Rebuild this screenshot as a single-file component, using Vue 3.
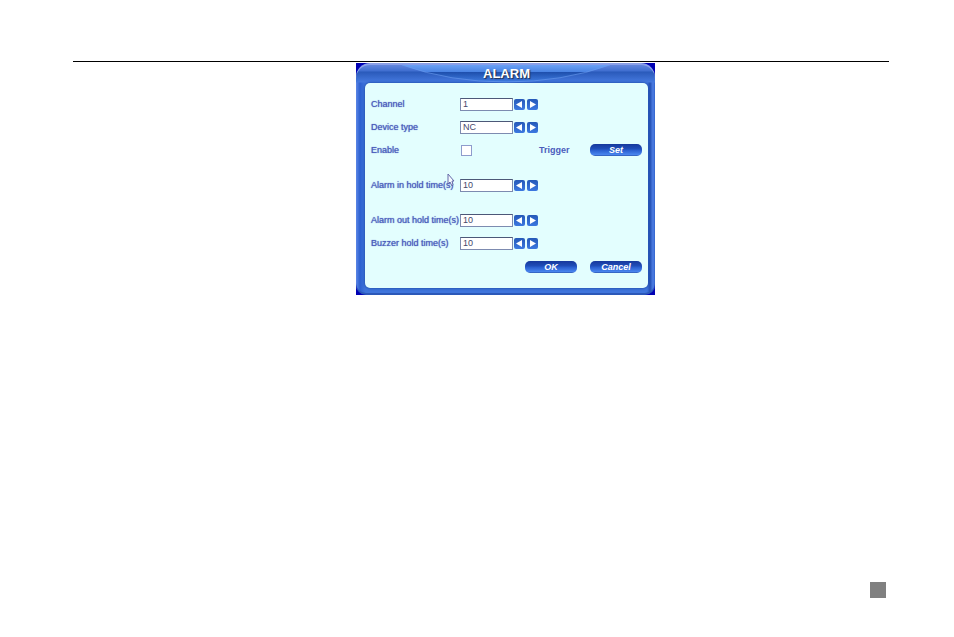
<script setup>
import { reactive, ref } from "vue";

const fields = reactive([
  { id: "channel", label: "Channel", value: "1" },
  { id: "device-type", label: "Device type", value: "NC", options: ["NC", "NO"] },
  { id: "alarm-in", label: "Alarm in hold time(s)", value: "10", spaced: true },
  { id: "alarm-out", label: "Alarm out hold time(s)", value: "10", spaced: true },
  { id: "buzzer", label: "Buzzer hold time(s)", value: "10" }
]);

const enabled = ref(false);

const step = (field, delta) => {
  if (field.options) {
    const count = field.options.length;
    const index = field.options.indexOf(field.value);
    field.value = field.options[(index + delta + count) % count];
    return;
  }
  field.value = String(Math.max(1, Number(field.value) + delta));
};
</script>

<template>
  <main class="page">
    <hr class="rule" />

    <div class="figure">
      <section class="dialog" aria-labelledby="dialog-title">
        <svg class="swoosh" viewBox="0 0 299 20" preserveAspectRatio="none" aria-hidden="true">
          <defs>
            <linearGradient id="swoosh-fill" x1="0" y1="0" x2="0" y2="1">
              <stop offset="0" stop-color="#6aa0f4" />
              <stop offset="0.4" stop-color="#4a84e4" />
              <stop offset="0.44" stop-color="#1f50ae" />
              <stop offset="1" stop-color="#3f7ce0" />
            </linearGradient>
          </defs>
          <path d="M46 2H254Q206 19 150 19Q94 19 46 2Z" fill="url(#swoosh-fill)" />
          <path d="M46 2Q94 19 150 19Q206 19 254 2" fill="none" stroke="#6c9cf0" stroke-opacity="0.6" />
        </svg>

        <h1 id="dialog-title" class="title">ALARM</h1>

        <form class="panel" @submit.prevent>
          <template v-for="field in fields" :key="field.id">
            <div :class="['row', { spaced: field.spaced }]">
              <label :for="field.id">{{ field.label }}</label>
              <input :id="field.id" v-model="field.value" class="box" type="text" />
              <button class="arrow" type="button" aria-label="Previous" @click="step(field, -1)">
                <svg viewBox="0 0 11 11"><path d="M8 2V9L2 5.500Z" /></svg>
              </button>
              <button class="arrow" type="button" aria-label="Next" @click="step(field, 1)">
                <svg viewBox="0 0 11 11"><path d="M3 2V9L9 5.500Z" /></svg>
              </button>
            </div>

            <div v-if="field.id === 'device-type'" class="row">
              <label for="enable">Enable</label>
              <input id="enable" v-model="enabled" class="check" type="checkbox" />
              <span class="trigger">Trigger</span>
              <button class="pill" type="button">Set</button>
            </div>
          </template>

          <div class="row actions">
            <button class="pill" type="submit">OK</button>
            <button class="pill" type="button">Cancel</button>
          </div>
        </form>

        <svg class="cursor" viewBox="0 0 8 14" aria-hidden="true">
          <path d="M1 1V11L3 9L5 13L6 12L5 8H7Z" />
        </svg>
      </section>
    </div>

    <footer class="footer">
      <span class="marker"></span>
    </footer>
  </main>
</template>

<style>
body {
  margin: 0;
  background: #fff;
}
</style>

<style scoped>
.page {
  box-sizing: border-box;
  min-height: 100vh;
  padding: 61px 65px 39px 73px;
  display: flex;
  flex-direction: column;
  font-family: "Liberation Sans", Arial, sans-serif;
}

.rule {
  width: 100%;
  height: 1px;
  margin: 0 0 1px;
  border: 0;
  background: #000;
}

.figure {
  position: relative;
  z-index: 0;
  padding-left: 49px;
  display: flex;
  justify-content: center;
}

.dialog {
  position: relative;
  box-sizing: border-box;
  width: 299px;
  padding: 0 7px 7px 9px;
  background:
    linear-gradient(#6e8ee2 0, #3f6ed0 8px, #2a5aba 9px, #4478de 19px, transparent 20px),
    linear-gradient(90deg, #5c86e6 0, #2c60d0 4px, #3f75dc 9px, #3f75dc 291px, #2450b4 294px, #4d7ee4 297px, #3263cc 299px);
  border-radius: 14px 14px 10px 10px;
  box-shadow: inset 0 2px #8a9fe8, inset 0 -2px #2b58b8;
}

/* the screen behind the dialog shows at its rounded corners */
.dialog::before {
  content: "";
  position: absolute;
  z-index: -1;
  inset: 0;
  background: #0000b4;
}

.swoosh {
  position: absolute;
  top: 0;
  left: 0;
  width: 100%;
  height: 20px;
}

.title {
  position: relative;
  margin: 0;
  padding-top: 1px;
  color: #fff;
  font-size: 13px;
  line-height: 19px;
  text-align: center;
  text-shadow: 1px 1px 1px #24304c;
}

.panel {
  padding: 14px 6px;
  display: flex;
  flex-direction: column;
  gap: 9px;
  border-radius: 5px;
  background: #e3fefe;
  box-shadow: 0 0 3px #123c94;
}

.row {
  height: 14px;
  display: flex;
  align-items: center;
  color: #4a5cbc;
  font-size: 9px;
  line-height: 14px;
}

.row.spaced {
  margin-top: 12px;
}

.row label {
  flex: 0 0 89px;
  text-shadow: 0 0 1px #4a5cbc;
  white-space: nowrap;
}

.trigger {
  font-weight: bold;
}

.box {
  box-sizing: border-box;
  width: 53px;
  height: 13px;
  margin: 0 1px 0 0;
  padding: 0 2px;
  border: 1px solid #7d8bb0;
  border-top-color: #4c5878;
  border-radius: 0;
  background: #fff;
  color: #44486c;
  font: 9px "Liberation Sans", Arial, sans-serif;
}

.arrow {
  width: 11px;
  height: 11px;
  margin-right: 2px;
  padding: 0;
  display: flex;
  border: 0;
  border-radius: 2px;
  background: linear-gradient(#2559b8, #3c78e0);
}

.arrow svg {
  width: 11px;
  height: 11px;
  fill: #fff;
}

.check {
  appearance: none;
  box-sizing: border-box;
  width: 11px;
  height: 11px;
  margin: 0 67px 0 1px;
  border: 1px solid #8e9ccc;
  background: #fff;
}

.check:checked {
  background: #3c78e0;
}

.pill {
  width: 52px;
  height: 12px;
  margin-left: auto;
  padding: 0;
  border: 0;
  border-radius: 5px;
  background: linear-gradient(#16389c 0, #1f4db8 40%, #2c62d2 55%, #4a86ee 90%, #2850a8 100%);
  color: #fff;
  font: italic bold 9px/12px "Liberation Sans", Arial, sans-serif;
}

.actions {
  margin-top: 1px;
  justify-content: flex-end;
  gap: 13px;
}

.actions .pill {
  margin: 0;
}

.cursor {
  position: absolute;
  top: 110px;
  left: 91px;
  width: 8px;
  height: 14px;
  fill: #f4faff;
  stroke: #6468a8;
}

.footer {
  margin-top: auto;
  padding-right: 3px;
  display: flex;
  justify-content: flex-end;
}

.marker {
  width: 16px;
  height: 16px;
  background: #808080;
}
</style>
